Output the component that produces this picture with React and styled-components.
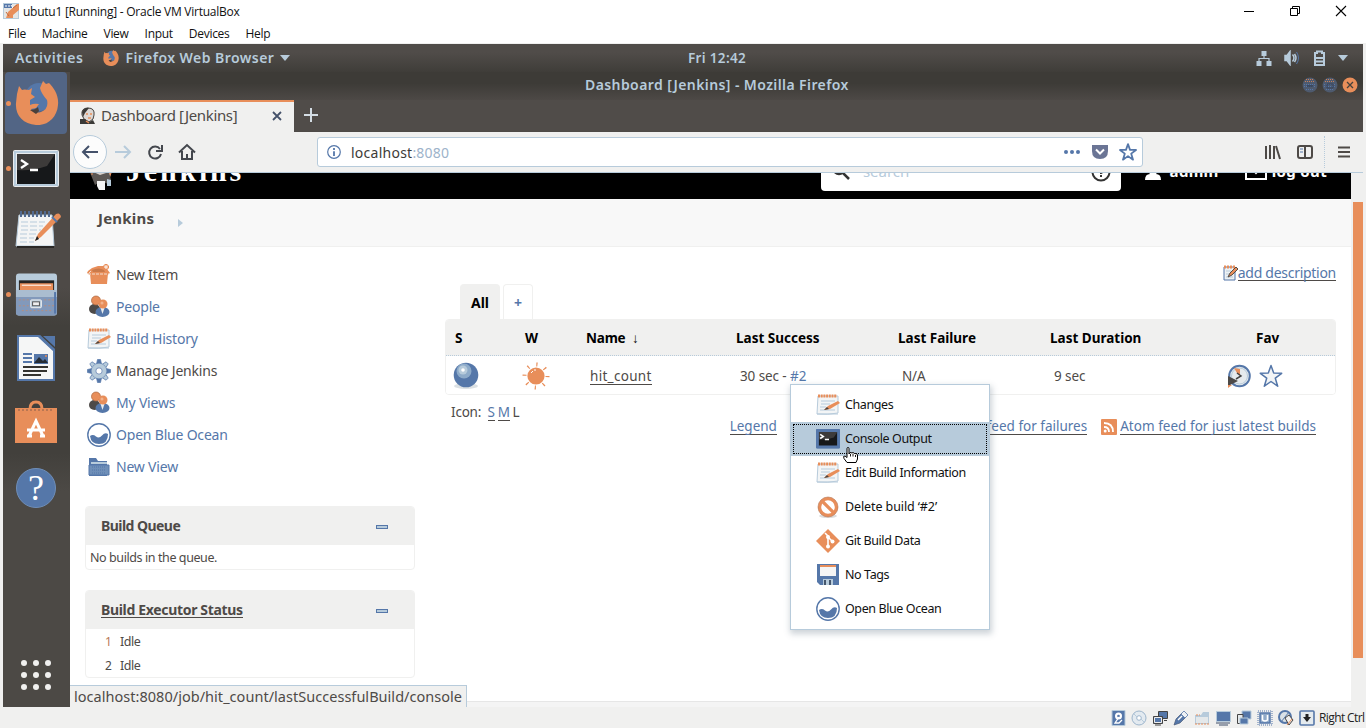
import React from "react";
import styled, { createGlobalStyle, css } from "styled-components";

const c = {
  orange: "#e88e5a",
  blue: "#5577a9",
  pale: "#b7cbdb",
  dark: "#4e4a47",
  ink: "#3d3b37",
  light: "#f0f0ef",
};

const Global = createGlobalStyle`
  * { box-sizing: border-box; }
  body { margin: 0; background: #f0f0ef; overflow: hidden; font-family: "Noto Sans", sans-serif; }
  svg { display: block; flex: none; }
`;

const Text = styled.span`
  white-space: pre;
  font-size: ${(p) => p.$size || 14}px;
  font-weight: ${(p) => p.$weight || 400};
  letter-spacing: ${(p) => p.$ls || 0}px;
  color: ${(p) => p.$color || c.dark};
`;
const Link = styled(Text)`
  color: ${(p) => p.$color || c.blue};
  line-height: 15px;
  border-bottom: 1px solid ${(p) => p.$line || c.dark};
`;
const Icon = styled.svg.attrs((p) => ({
  width: p.$w || 16,
  height: p.$h || 16,
  viewBox: `0 0 ${p.$w || 16} ${p.$h || 16}`,
  fill: "none",
  stroke: p.$color || c.dark,
  strokeWidth: p.$sw || 2,
}))`
  margin-left: ${(p) => p.$ml || 0};
  margin-top: ${(p) => p.$mt || 0}px;
`;

const Screen = styled.div`
  width: 1366px;
  height: 728px;
  display: flex;
  flex-direction: column;
  overflow: hidden;
`;
const HostTitle = styled.header`
  height: 24px;
  background: #fff;
  display: flex;
  align-items: center;
  padding: 0 19px 2px 3px;
  gap: 4px;
  font-family: "Open Sans", sans-serif;
`;
const HostButtons = styled.div`
  margin-left: auto;
  display: flex;
  gap: 34px;
`;
const HostMenu = styled.nav`
  height: 20px;
  background: #fff;
  display: flex;
  align-items: center;
  padding-left: 8px;
  gap: 16px;
  border-bottom: 1px solid ${c.light};
  font-family: "Open Sans", sans-serif;
`;
const Machine = styled.div`
  width: 1360px;
  height: 663px;
  margin-left: 3px;
  display: flex;
  flex-direction: column;
  position: relative;
  overflow: hidden;
`;
const TopBar = styled.div`
  height: 28px;
  background: linear-gradient(#504c49 30%, #3f3d39);
  display: grid;
  grid-template-columns: 673px 60px 1fr;
  align-items: center;
  padding: 0 15px 1px 12px;
`;
const BarGroup = styled.div`
  display: flex;
  align-items: center;
  gap: ${(p) => p.$gap || 0}px;
  justify-content: ${(p) => (p.$end ? "flex-end" : "flex-start")};
`;
const Desk = styled.div`
  flex: 1;
  display: flex;
  min-height: 0;
`;
const Dock = styled.aside`
  width: 67px;
  background: linear-gradient(#4e4a47 0 34%, #42403c 40% 60%, #4c4945 66% 100%);
  display: flex;
  flex-direction: column;
`;
const DockItem = styled.div`
  height: 64px;
  display: flex;
  align-items: center;
  padding-left: 3px;
  padding-top: ${(p) => p.$drop || 0}px;
  ${(p) =>
    p.$active &&
    css`
      height: 62px;
      margin: 0 3px 0 2px;
      padding-left: 1px;
      border-radius: 4px;
      background: #526585;
    `}
`;
const Dot = styled.i`
  width: 5px;
  height: 5px;
  border-radius: 50%;
  margin-right: ${(p) => (p.$wide ? 2 : 4)}px;
  background: ${(p) => (p.$on ? c.orange : "transparent")};
`;
const Apps = styled.div`
  margin: auto auto 17px 18px;
  display: grid;
  grid-template-columns: repeat(3, 6px);
  gap: 6px;
`;
const AppDot = styled.i`
  height: 6px;
  border-radius: 50%;
  background: #f0f0ef;
`;
const Browser = styled.section`
  flex: 1;
  min-width: 0;
  display: flex;
  flex-direction: column;
`;
const WinTitle = styled.div`
  height: 28px;
  background: linear-gradient(#3d3b37 40%, #4d4946);
  display: flex;
  align-items: center;
  justify-content: space-between;
  padding: 0 5px 3px 515px;
`;
const Controls = styled.div`
  display: flex;
  gap: 4px;
`;
const TabStrip = styled.div`
  height: 32px;
  background: #504c49;
  border-bottom: 1px solid ${c.dark};
  display: flex;
  align-items: center;
`;
const Tab = styled.div`
  width: 224px;
  height: 32px;
  background: ${c.light};
  border-top: 2px solid ${c.orange};
  display: flex;
  align-items: center;
  gap: 5px;
  padding: 0 12px 2px 10px;
  ${Text} {
    margin-top: -2px;
  }
`;
const NavBar = styled.div`
  height: 41px;
  background: ${c.light};
  border-bottom: 1px solid ${c.pale};
  display: flex;
  align-items: center;
  padding: 0 12px 0 3px;
`;
const Back = styled.div`
  width: 34px;
  height: 34px;
  border: 1px solid ${c.pale};
  border-radius: 50%;
  background: #fcfcfc;
  display: grid;
  place-items: center;
`;
const NavIcons = styled.div`
  display: flex;
  align-items: center;
  gap: 14px;
  margin-left: 7px;
  width: 203px;
`;
const UrlBox = styled.div`
  width: 826px;
  height: 30px;
  background: #fff;
  border: 1px solid ${c.pale};
  border-radius: 3px;
  margin-right: auto;
  display: flex;
  align-items: center;
  padding: 0 5px 0 9px;
`;
const UrlText = styled(Text)`
  color: ${c.ink};
  margin-left: 10px;
`;
const UrlIcons = styled.div`
  margin-left: auto;
  display: flex;
  align-items: center;
  gap: 10px;
`;
const Sep = styled.i`
  height: 32px;
  border-left: 1px dotted ${c.pale};
  margin: 0 12px 0 10px;
`;
const Viewport = styled.div`
  flex: 1;
  min-height: 0;
  display: flex;
`;
const Page = styled.main`
  width: 1281px;
  background: #fff;
  display: flex;
  flex-direction: column;
`;
const Scroll = styled.div`
  width: 12px;
  padding: 29px 0 0 2px;
  background: #f0f0ef;
`;
const Thumb = styled.div`
  height: 456px;
  background: ${c.orange};
`;
const JHead = styled.header`
  height: 26px;
  background: #000;
  overflow: hidden;
  display: flex;
  align-items: flex-end;
`;
const JHeadRow = styled.div`
  width: 100%;
  height: 54px;
  flex: none;
  display: flex;
  align-items: center;
  padding: 0 24px 0 18px;
  ${Text} {
    margin-top: -2px;
  }
`;
const Brand = styled.span`
  font: bold 30px "Liberation Serif", serif;
  letter-spacing: 2.8px;
  color: #fff;
  margin: -2px 0 0 12px;
`;
const Search = styled.div`
  margin-left: auto;
  width: 300px;
  height: 38px;
  background: #fff;
  border-radius: 4px;
  display: flex;
  align-items: center;
  padding: 0 10px;
  margin-right: 24px;
`;
const Crumbs = styled.div`
  height: 48px;
  background: #f8f8f8;
  border-bottom: 1px solid ${c.light};
  display: flex;
  align-items: center;
  padding: 0 28px 9px;
  gap: 24px;
`;
const Body = styled.div`
  flex: 1;
  display: flex;
  padding: 12px 15px 0 15px;
`;
const PageFoot = styled.footer`
  height: 6px;
  border-top: 1px solid #e6e6e6;
  background: #f4f4f4;
`;
const Side = styled.div`
  width: 330px;
  margin-right: 30px;
`;
const Task = styled.div`
  height: 32px;
  display: flex;
  align-items: center;
  gap: 5px;
  padding-left: 2px;
  ${Text} {
    margin-top: -2px;
  }
`;
const Pane = styled.section`
  border: 1px solid ${c.light};
  border-radius: 4px;
  margin-top: ${(p) => p.$top}px;
  height: ${(p) => p.$h}px;
  overflow: hidden;
`;
const PaneHead = styled.div`
  height: 38px;
  background: ${c.light};
  display: flex;
  align-items: center;
  justify-content: space-between;
  padding: 0 26px 0 15px;
`;
const PaneTitle = styled(Text)`
  margin-top: -2px;
`;
const Minus = styled.i`
  width: 12px;
  height: 4px;
  margin-top: 2px;
  background: ${c.pale};
  border: 1px solid ${c.blue};
`;
const PaneRow = styled.div`
  height: 24px;
  display: flex;
  align-items: center;
  gap: 8px;
  padding-left: ${(p) => p.$pl}px;
`;
const Main = styled.div`
  width: 891px;
`;
const Describe = styled.div`
  display: flex;
  justify-content: flex-end;
  align-items: center;
  height: 25px;
  padding-top: 3px;
`;
const Tabs = styled.div`
  display: flex;
  gap: 3px;
  height: 35px;
  padding-left: 15px;
`;
const ViewTab = styled.div`
  width: ${(p) => p.$w}px;
  border-radius: 4px 4px 0 0;
  border: 1px solid ${c.light};
  border-bottom: 0;
  background: ${(p) => (p.$on ? c.light : "#fff")};
  display: grid;
  place-items: center;
  padding-top: 1px;
`;
const Table = styled.div`
  border: 1px solid ${c.light};
  border-radius: 4px;
  height: 76px;
  overflow: hidden;
`;
const Tr = styled.div`
  display: grid;
  grid-template-columns: 70px 61px 150px 162px 152px 206px 1fr;
  align-items: center;
  padding-left: 9px;
  height: ${(p) => (p.$head ? 36 : 38)}px;
  background: ${(p) => (p.$head ? c.light : "#fff")};
  ${(p) => p.$head && `border-bottom: 1px dotted ${c.pale};`}
`;
const Cell = styled.div`
  display: flex;
  align-items: center;
  padding: ${(p) => p.$top || 2}px 0 0 4px;
`;
const IconCell = styled.div`
  padding-top: 1px;
  display: flex;
  gap: 8px;
  margin-left: -${(p) => p.$shift}px;
`;
const Below = styled.div`
  display: flex;
  height: 44px;
  justify-content: space-between;
`;
const Sizes = styled.div`
  display: flex;
  align-items: baseline;
  gap: 3px;
  padding: 8px 0 0 6px;
`;
const Feeds = styled.div`
  display: flex;
  align-items: flex-start;
  padding: 24px 20px 0 0;
`;
const Feed = styled.div`
  display: flex;
  gap: 3px;
  margin-left: ${(p) => p.$ml}px;
`;
const UrlStatus = styled.div`
  position: absolute;
  left: 67px;
  bottom: 0;
  width: 397px;
  height: 22px;
  background: ${c.light};
  border: solid ${c.pale};
  border-width: 1px 1px 0 0;
  display: flex;
  align-items: center;
  padding: 0 0 2px 4px;
`;
const Menu = styled.div`
  position: absolute;
  left: 787px;
  top: 340px;
  width: 200px;
  height: 246px;
  background: #fff;
  border: 1px solid ${c.pale};
  padding: 3px 0;
  box-shadow: 1px 3px 6px 1px rgba(80, 100, 120, 0.28);
`;
const MenuItem = styled.div`
  height: 34px;
  display: flex;
  align-items: center;
  gap: 5px;
  padding-left: 25px;
  ${Text} {
    margin-top: -2px;
  }
  ${(p) =>
    p.$on &&
    css`
      background: ${c.pale};
      border: 1px dotted #000;
      box-shadow: 0 0 0 2px ${c.pale};
      height: 30px;
      margin: 2px;
      padding-left: 22px;
    `}
`;
const Cursor = styled.div`
  position: absolute;
  left: 840px;
  top: 403px;
`;
const Status = styled.footer`
  height: 21px;
  display: flex;
  align-items: center;
  gap: 5px;
  padding-left: 1110px;
  font-family: "Open Sans", sans-serif;
`;
const KeyLabel = styled(Text)`
  margin-left: -1px;
`;
const HelpBadge = styled.div`
  width: 40px;
  height: 40px;
  border-radius: 50%;
  background: ${c.blue};
  border: 1px solid #6f8eb8;
  display: grid;
  place-items: center;
  color: #fff;
  font: 36px/38px "Liberation Serif", serif;
  margin: 4px 0 0 1px;
`;

const Firefox = ({ s = 44 }) => (
  <svg width={s} height={s} viewBox="0 0 44 44">
    <circle cx="24" cy="16" r="14" fill={c.blue} />
    <path
      fill={c.orange}
      d="M28 0 L31 3 34 2 C39 7 44 14 43 24 C42 37 32 45 21 44 C8 43 0 34 1 22 L2 13 4 5 7 9 Q9 8 14 9 L17 7 16 13 20 16 15 19 15 24 Q19 22 24 23 L21 27 16 28 Q19 33 26 31 Q34 28 32 19 Q26 12 25 7Z"
    />
    <path fill="#4a3f3a" d="M15 29q5 0 8-3l1 4-3 3z" />
  </svg>
);
const TerminalIcon = ({ small }) => (
  <svg width={small ? 24 : 46} height={small ? 20 : 38} viewBox="0 0 46 38">
    <rect width="46" height="37" rx="2" fill={small ? c.blue : "#e9ecee"} />
    <rect x="2" y="2" width="42" height="33" fill="none" stroke={small ? c.blue : c.pale} strokeWidth="2" />
    <rect x="4" y="4" width="38" height="30" fill="#16181a" />
    <path d="M4 4h38L34 16Q20 21 4 20z" fill="#3d3b3a" />
    {small && <path d="M3 3h40v31H3z" fill="none" stroke={c.blue} strokeWidth="5" />}
    <path d="M8 10l6 4-6 4M17 20h8" stroke="#fff" strokeWidth={small ? 3 : 2.3} fill="none" />
  </svg>
);
const NoteIcon = () => (
  <svg width="46" height="40" viewBox="0 0 46 40">
    <path d="M4 5h33l2 31H1z" fill="#f4f5f5" stroke={c.pale} />
    <path d="M2 37h37" stroke="#2a2826" strokeWidth="2" />
    <path d="M5 4h31" stroke="#526b91" strokeWidth="6" strokeDasharray="2 2" />
    <path d="M6 12h24M6 16h22M6 20h20M5 24h17M5 28h14M5 32h14" stroke={c.pale} strokeDasharray="7 2" />
    <path d="M20 31l3-7L41 4q4-2 5 3L26 27z" fill={c.orange} />
    <path d="M37 7l5 5" stroke={c.blue} strokeWidth="2" />
    <path d="M20 31l2-5 2 3z" fill="#222" />
  </svg>
);
const FilesIcon = () => (
  <svg width="43" height="45" viewBox="0 0 44 45">
    <rect x="1" y="1" width="42" height="43" rx="3" fill={c.pale} />
    <rect x="4" y="8" width="36" height="14" fill="#262524" />
    <path d="M5 11h34v10H5z" fill={c.orange} />
    <path d="M7 13h30" stroke="#fff" />
    <path d="M1 18h42v23q0 3-3 3H4q-3 0-3-3z" fill="#8299bb" />
    <path d="M1 18h42v7H1z" fill="#aabdd0" />
    <path d="M4 28h10M30 28h10M4 34h10M30 34h10M7 39h31" stroke="#b58d7d" strokeDasharray="2 2" />
    <path d="M41 20v22" stroke={c.blue} strokeWidth="2" />
    <rect x="16" y="28" width="11" height="8" rx="1" fill={c.pale} stroke="#eee" />
    <rect x="18" y="30" width="7" height="4" fill="#eee" stroke="#555" />
  </svg>
);
const WriterIcon = () => (
  <svg width="42" height="46" viewBox="0 0 42 46">
    <path d="M3 1h21l15 14v30H3z" fill="#f5f6f6" stroke={c.blue} strokeWidth="2" />
    <path d="M28 1h12v11z" fill={c.blue} />
    <path d="M24 1l15 14" stroke={c.blue} strokeWidth="3" />
    <path d="M8 19h9M8 23h9M8 27h9" stroke={c.blue} strokeWidth="2" />
    <rect x="19" y="19" width="14" height="10" fill={c.blue} />
    <path d="M19 28l5-6 4 4 2-2 3 4z" fill="#252c34" />
    <circle cx="31" cy="21" r="1" fill={c.orange} />
    <path d="M8 32h25M8 36h24M8 40h18" stroke="#34332f" strokeWidth="2" />
  </svg>
);
const BagIcon = () => (
  <svg width="42" height="44" viewBox="0 0 42 44">
    <path d="M0 8h42v35H0z" fill={c.orange} />
    <path d="M15 9q0-7 6-7t6 7" fill="none" stroke={c.orange} strokeWidth="3" />
    <path d="M3 10h36" stroke="#8b5f4a" strokeDasharray="2 2" />
    <path d="M14 36l7-15 7 15M12 30h18M12 36h5M25 36h5" fill="none" stroke="#fff" strokeWidth="3" />
  </svg>
);

const Face = () => (
  <svg width="16" height="17" viewBox="0 0 16 17">
    <path d="M2 8Q1 1 8 1t6 7l-1 4-4 3-5-3z" fill="#dcd8d5" stroke="#44413e" />
    <path d="M2 5q3-5 7-4l-4 5-2 4zM0 12l5 0 4 3 4-2 2 4H0z" fill="#3a3937" />
    <path d="M6 7h2m2 0h2M8 11h3M6 14l3 2" stroke={c.orange} strokeWidth="1.5" />
  </svg>
);
const Butler = () => (
  <svg width="26" height="40" viewBox="0 0 26 40">
    <path d="M2 15Q4 2 14 3q10 1 10 15l-3 9-9 4z" fill="#d9d3cf" stroke={c.orange} />
    <path d="M1 18l11 5 9-3 2 8-3 4-7-3-6 4z" fill="#5c5855" />
    <path d="M4 18v6M20 17l2 6" stroke={c.orange} strokeDasharray="2 1" />
    <path d="M9 29h8v9h-6l-2-4z" fill="#f4f4f4" />
    <path d="M19 27l4 1v6h-4z" fill={c.pale} />
  </svg>
);
const Pad = () => (
  <svg width="24" height="24" viewBox="0 0 24 24">
    <path d="M2 3h20v17q-10 2-21 1z" fill="#f3f5f6" stroke={c.pale} />
    <path d="M2 3h19" stroke={c.orange} strokeWidth="3" strokeDasharray="2 .7" />
    <path d="M1 21h21M5 8h14M5 11h9M4 14h6M4 17h15" stroke={c.pale} />
    <path d="M8 17l4-4 10-5 2 2-10 6z" fill={c.orange} />
    <path d="M8 17l3-3 2 2z" fill="#4d453e" />
  </svg>
);
const Box = () => (
  <svg width="24" height="24" viewBox="0 0 24 24">
    <path d="M3 10h18l-1 11H4z" fill={c.orange} />
    <path d="M1 8l4-3 6-2h6l3 3 3 4-3 2H3l-3-2z" fill={c.orange} />
    <path d="M5 7q7-3 12 0l1 2H6z" fill="#c97a4b" />
    <path d="M1 11h21M4 8l-3 3" stroke="#f3ded1" fill="none" strokeDasharray="3 1" />
    <path d="M19 1v6M16 4h6" stroke={c.orange} strokeWidth="3" />
    <path d="M19 2v4M17 4h4" stroke="#fff" />
  </svg>
);
const People = () => (
  <svg width="24" height="24" viewBox="0 0 24 24">
    <ellipse cx="7.500" cy="14" rx="5.500" ry="5" fill="#4d4a48" />
    <circle cx="9" cy="5.500" r="4.500" fill={c.orange} stroke="#a9663f" strokeWidth=".7" />
    <ellipse cx="15.500" cy="17" rx="7" ry="5" fill={c.blue} />
    <path d="M13.500 13l2 6 2-6z" fill="#e9edf0" />
    <circle cx="16" cy="9" r="4.500" fill={c.orange} />
    <circle cx="15" cy="8" r="1.500" fill="#f2b38d" />
  </svg>
);
const teeth = [0, 45, 90, 135, 180, 225, 270, 315];
const Gear = () => (
  <svg width="24" height="24" viewBox="0 0 24 24">
    {teeth.map((a) => (
      <path key={a} d="M9.500 5l1-4.500h3l1 4.500z" fill={a % 90 ? c.pale : c.blue} stroke={c.blue} strokeWidth=".7" transform={`rotate(${a} 12 12)`} />
    ))}
    <circle cx="12" cy="12" r="5.600" fill="none" stroke={c.pale} strokeWidth="4.500" />
    <circle cx="12" cy="12" r="7.800" fill="none" stroke={c.blue} strokeWidth=".5" />
    <circle cx="12" cy="12" r="3.200" fill="#fff" stroke={c.blue} strokeWidth=".8" />
  </svg>
);
const Ocean = () => (
  <svg width="24" height="24" viewBox="0 0 24 24">
    <circle cx="12" cy="12" r="11.2" fill="#fff" stroke={c.blue} strokeWidth="1.4" />
    <path d="M3 13q3-2 6 .5t6-1 6-1.500q0 10-9 10-8 0-9-8z" fill={c.blue} />
  </svg>
);
const FolderIcon = () => (
  <svg width="24" height="24" viewBox="0 0 24 24">
    <path d="M2 3h7l2 3h9v15H2z" fill={c.blue} />
    <path d="M4 8h16" stroke={c.pale} strokeWidth="2" />
    <path d="M2 20V10h20v10H2z" fill="#6f8fb8" stroke={c.blue} />
    <path d="M5 12h14M5 15h13M5 18h14" stroke={c.blue} strokeDasharray="1 1" />
  </svg>
);
const Ball = () => (
  <svg width="26" height="28" viewBox="0 0 26 28">
    <ellipse cx="13" cy="24" rx="12" ry="3" fill="#dbe0e3" />
    <circle cx="13" cy="13" r="12.300" fill={c.blue} />
    <circle cx="11" cy="9" r="7.500" fill="#8eabc9" />
    <circle cx="10" cy="8" r="4.500" fill={c.pale} />
    <circle cx="10" cy="8" r="1.800" fill="#fff" />
  </svg>
);
const Sun = () => (
  <svg width="28" height="28" viewBox="0 0 28 28">
    <circle cx="14" cy="14" r="11.500" fill="none" stroke={c.orange} strokeWidth="4" strokeDasharray="1.200 7.830" />
    <circle cx="14" cy="14" r="8.600" fill={c.orange} />
    <path d="M9 11l2-2m1-1h2" stroke="#fff" />
  </svg>
);
const Schedule = () => (
  <svg width="24" height="24" viewBox="0 0 24 24">
    <circle cx="12.500" cy="12" r="10.300" fill="#e5eaed" stroke={c.blue} strokeWidth="2" />
    <circle cx="12.500" cy="12" r="8" fill="none" stroke={c.pale} />
    <path d="M7 4l6 1v6l-3-2z" fill={c.orange} />
    <path d="M10 9l4 3-5 3" fill="none" stroke="#444" strokeWidth="1.500" />
    <path d="M1 12l10 5-10 5z" fill="#4d4a48" />
    <path d="M1 21v3l4-3z" fill={c.orange} />
  </svg>
);
const Star = ({ s, fill = "#fff", sw = 1.5 }) => (
  <svg width={s} height={s} viewBox="0 0 24 24">
    <path
      d="M12 1.500l2.700 7.600 8 .2-6.400 4.900 2.400 8L12 17.500l-6.700 4.700 2.400-8L1.300 9.300l8-.2z"
      fill={fill}
      stroke={c.blue}
      strokeWidth={sw}
      strokeLinejoin="round"
    />
  </svg>
);
const Rss = () => (
  <svg width="16" height="16" viewBox="0 0 16 16">
    <rect width="16" height="16" rx="1" fill={c.orange} />
    <path d="M3 4q9 0 9 9M3 8q5 0 5 5" stroke="#fff" strokeWidth="1.800" fill="none" />
    <circle cx="4.200" cy="12" r="1.500" fill="#fff" />
  </svg>
);
const EditIcon = () => (
  <svg width="15" height="16" viewBox="0 0 15 16">
    <path d="M1 2h11v13H1z" fill="#eef1f3" stroke={c.blue} />
    <path d="M1 2h11" stroke={c.orange} strokeWidth="3" strokeDasharray="2 1" />
    <path d="M3 6h5M3 9h3M3 12h7" stroke={c.pale} />
    <path d="M5 12l2-4 6-6 2 2-6 6z" fill={c.orange} stroke="#44413e" strokeWidth=".9" />
  </svg>
);
const Forbid = () => (
  <svg width="24" height="24" viewBox="0 0 24 24">
    <ellipse cx="12" cy="21" rx="9" ry="2" fill="#ddd" />
    <circle cx="12" cy="12" r="8.400" fill="#fff" stroke={c.orange} strokeWidth="3.200" />
    <path d="M6 6l12 12" stroke={c.orange} strokeWidth="3.200" />
    <circle cx="12" cy="12" r="10" fill="none" stroke="#b37452" strokeWidth=".6" />
  </svg>
);
const Git = () => (
  <svg width="24" height="24" viewBox="0 0 24 24">
    <path d="M12 0l12 12-12 12L0 12z" fill={c.orange} />
    <path d="M9 4l3 3v11M12 8l5 5" stroke="#fff" strokeWidth="1.600" fill="none" />
    <circle cx="12" cy="8" r="2" fill="#fff" />
    <circle cx="12" cy="17.500" r="2" fill="#fff" />
    <circle cx="16.500" cy="12.500" r="2" fill="#fff" />
  </svg>
);
const Floppy = () => (
  <svg width="24" height="24" viewBox="0 0 24 24">
    <path d="M1 1h22v21H4l-3-3z" fill={c.blue} />
    <rect x="4" y="2" width="16" height="11" fill="#f5f5f5" />
    <path d="M4 3h16" stroke={c.orange} strokeWidth="2" />
    <path d="M7 16h10v6H7z" fill={c.pale} />
    <path d="M9 17v5M14 17v5" stroke="#45566d" strokeWidth="2" />
  </svg>
);
const Hand = () => (
  <svg width="16" height="17" viewBox="0 0 16 17">
    <path
      d="M4 1.500q0-1 1-1t1 1V7l1-1.500 2 .5 1-.5 1.500 1 2 .2 1 1.300v4L13 15.500H4L1 11.500 .6 9.500 2 9l2 1.500z"
      fill="#fff"
      stroke="#000"
    />
    <path d="M7.500 7v2.500M10 7v2.500M12.500 8v2" stroke="#000" strokeWidth=".9" />
  </svg>
);
const HostIcon = () => (
  <svg width="16" height="16" viewBox="0 0 16 16">
    <rect x=".5" y=".5" width="15" height="15" fill="#e5e5e3" stroke={c.pale} />
    <path d="M3 15l2-6 9-8h2v6l-6 5v3z" fill={c.orange} />
    <path d="M1 1h8v4H1z" fill={c.blue} />
    <path d="M2 3h2m1 0h2M8 2l2 3" stroke="#fff" />
    <path d="M10 5l4-3M3 9l3 4" stroke="#c46b3c" />
  </svg>
);

const statusShapes = [
  <g key="disk"><path d="M2 .5h13v15H2z" fill={c.blue} stroke={c.pale} /><circle cx="8.500" cy="6" r="3.500" fill="#fff" /><circle cx="8.500" cy="6" r="1.300" fill={c.blue} /><path d="M9 7l-4 6h4l3-3" fill="none" stroke="#fff" strokeWidth="1.300" /></g>,
  <g key="cd"><circle cx="8" cy="8" r="7" fill="#e3eaf0" stroke="#9db5cc" /><circle cx="8" cy="8" r="2.300" fill="#fff" stroke="#9db5cc" /><path d="M3 4l3 3M10 9l3 3" stroke={c.pale} /></g>,
  <g key="net"><path d="M6.500 1.500h9v7h-9z" fill={c.blue} stroke="#444" /><path d="M1.500 6.500h9v7h-9z" fill={c.blue} stroke="#444" /><path d="M2.500 7.500h7v5h-7z" fill={c.blue} stroke="#eee" /><path d="M3 15h6M12 10.500h3" stroke="#444" /></g>,
  <g key="usb"><path d="M1 15l2-6 6-6 4 4-6 6z" fill={c.blue} stroke="#3c4d69" strokeWidth=".6" /><path d="M11 1l4 4-3 3-4-4z" fill="#eef1f4" stroke={c.blue} strokeWidth=".8" /><path d="M5 10l4-4" stroke="#fff" strokeWidth="1.500" /></g>,
  <g key="folder"><path d="M1 5h6l2-3h6v12H1z" fill={c.pale} /><path d="M2 7h12v6H2z" fill="#e4e8ea" /><path d="M1 14h14M2 5h4" stroke={c.orange} strokeDasharray="2 1" /></g>,
  <g key="display"><path d="M1.500 1.500h14v10h-14z" fill={c.blue} stroke={c.pale} /><path d="M1 13h14M4 15h9" stroke="#3c4d69" /></g>,
  <g key="windows"><path d="M6 1h9v8H6z" fill={c.blue} stroke={c.pale} /><path d="M1.500 4.500H7v9H1.500z" fill="#e4e8ea" stroke="#444" /><path d="M4 8h8v6H4z" fill={c.blue} stroke={c.pale} /></g>,
  <g key="cpu"><path d="M3 3h10v10H3z" fill="#8fa9c8" stroke={c.blue} strokeWidth="1.500" /><path d="M1 1h14v14H1z" fill="none" stroke={c.blue} strokeDasharray="1 1" /><path d="M5.500 5v5q2.500 2 5 0V5" fill="none" stroke="#fff" strokeWidth="1.600" /></g>,
  <g key="mouse"><circle cx="7" cy="7" r="6" fill="#d9e1e7" stroke={c.blue} strokeWidth="2" /><path d="M3 12L11 2" stroke={c.blue} /><path d="M7 8l4-3 4 5-4 5z" fill="#eee" stroke="#444" /><path d="M9 15l5-6" stroke={c.orange} /></g>,
  <g key="keyboard"><rect x="1" y="1" width="14" height="14" rx="1" fill="#e4eaee" stroke={c.blue} strokeWidth="1.600" /><path d="M8 4v4" stroke="#222" strokeWidth="3" /><path d="M4 7h8l-4 5z" fill="#222" /></g>,
];

const tasks = [
  ["New Item", Box, c.dark],
  ["People", People],
  ["Build History", Pad],
  ["Manage Jenkins", Gear, c.dark],
  ["My Views", People],
  ["Open Blue Ocean", Ocean],
  ["New View", FolderIcon],
];
const SmallTerminal = () => <TerminalIcon small />;
const menu = [
  ["Changes", Pad],
  ["Console Output", SmallTerminal],
  ["Edit Build Information", Pad],
  ["Delete build ‘#2’", Forbid, -0.1],
  ["Git Build Data", Git],
  ["No Tags", Floppy],
  ["Open Blue Ocean", Ocean],
];
const Help = () => <HelpBadge>?</HelpBadge>;
const dock = [
  { Art: Firefox, on: true },
  { Art: TerminalIcon, on: true, drop: 5 },
  { Art: NoteIcon },
  { Art: FilesIcon, on: true, drop: 1 },
  { Art: WriterIcon },
  { Art: BagIcon },
  { Art: Help },
];

export default function App() {
  return (
    <Screen>
      <Global />
      <HostTitle>
        <HostIcon />
        <Text $size={12} $ls={-0.25} $color="#111">ubutu1 [Running] - Oracle VM VirtualBox</Text>
        <HostButtons>
          <Icon $w={12} $h={12} $color="#000" $sw={1}><path d="M1 6.500h10" /></Icon>
          <Icon $w={12} $h={12} $color="#000" $sw={1}><path d="M1.500 3.500h7v7h-7zM3.500 3V1.500h7v7H9" /></Icon>
          <Icon $w={12} $h={12} $color="#000" $sw={1.1}><path d="M1 1l10 10M11 1L1 11" /></Icon>
        </HostButtons>
      </HostTitle>
      <HostMenu>
        {["File", "Machine", "View", "Input", "Devices", "Help"].map((t) => (
          <Text key={t} $size={12} $ls={-0.29} $color="#111">{t}</Text>
        ))}
      </HostMenu>
      <Machine>
        <TopBar>
          <BarGroup $gap={20}>
            <Text $weight={600} $ls={0.6} $color={c.pale}>Activities</Text>
            <BarGroup $gap={6}>
              <Firefox s={16} />
              <Text $weight={600} $ls={0.45} $color={c.pale}>Firefox Web Browser</Text>
              <Icon $w={10} $h={6} $color="none"><path d="M0 0h10L5 6z" fill={c.pale} /></Icon>
            </BarGroup>
          </BarGroup>
          <Text $size={13.5} $weight={600} $ls={0.33} $color={c.pale}>Fri 12:42</Text>
          <BarGroup $end $gap={12}>
            <Icon $color={c.pale} $sw={1.2}><path d="M8 4v5M3 11V8.500h10V11" /><path d="M5.500 1h5v5h-5zM.5 11h5v5h-5zM10.500 11h5v5h-5z" fill={c.pale} stroke="none" /></Icon>
            <Icon $color={c.pale} $sw={1.5}><path d="M1 5.500h2l3-4v13l-3-4H1z" fill={c.pale} /><path d="M8.500 4.500q3 3.500 0 7M10.500 4q3 4 0 8" /><path d="M12.500 2q4 6 0 12" stroke={c.blue} strokeWidth="1" /></Icon>
            <Icon $w={14} $color={c.pale}><path d="M3 3h2V1.500h5V3h2v12H3zM4 8h7M4 11.500h7" /></Icon>
            <Icon $w={10} $h={6} $color="none"><path d="M0 0h10L5 6z" fill={c.pale} /></Icon>
          </BarGroup>
        </TopBar>
        <Desk>
          <Dock>
            {dock.map(({ Art, on, drop }, i) => (
              <DockItem key={i} $active={i === 0} $drop={drop}>
                <Dot $on={on} $wide={i === 1} />
                <Art />
              </DockItem>
            ))}
            <Apps>{Array.from({ length: 9 }, (_, i) => <AppDot key={i} />)}</Apps>
          </Dock>
          <Browser>
            <WinTitle>
              <Text $size={14} $weight={600} $ls={0.41} $color={c.pale}>Dashboard [Jenkins] - Mozilla Firefox</Text>
              <Controls>
                {["#4e5a6e", "#4e5a6e", c.orange].map((f, i) => (
                  <svg key={i} width="16" height="16" viewBox="0 0 16 16">
                    <circle cx="8" cy="8" r="7.500" fill={f} />
                    {i < 2 && <path d="M4 2.500h8M3 4.500h10" stroke="#c98058" strokeDasharray="1 1" />}
                    {i < 2 && <path d="M2 7.500h12M2 9.500h12M4 12.500h8" stroke={c.blue} strokeDasharray="1 1" />}
                    {i === 0 && <path d="M5 9h6" stroke="#36435a" strokeWidth="1.500" />}
                    {i === 1 && <path d="M5 7h6v4H5z" stroke="#36435a" fill="none" />}
                    {i === 2 && <path d="M5 5l6 6M11 5l-6 6" stroke="#44403c" strokeWidth="1.300" />}
                  </svg>
                ))}
              </Controls>
            </WinTitle>
            <TabStrip>
              <Tab>
                <Face />
                <Text $size={15} $ls={-0.35}>Dashboard [Jenkins]</Text>
                <Icon $w={10} $h={10} $ml="auto" $color="#44516a" $sw={1.8}><path d="M1 1l8 8M9 1l-8 8" /></Icon>
              </Tab>
              <Icon $ml="9px" $mt={-2} $color="#d4dde4"><path d="M8 1v14M1 8h14" /></Icon>
            </TabStrip>
            <NavBar>
              <Back><Icon $w={18} $color="#44516a"><path d="M2 8h15M8 2L2 8l6 6" /></Icon></Back>
              <NavIcons>
                <Icon $w={18} $color={c.pale}><path d="M1 8h15M10 2l6 6-6 6" /></Icon>
                <Icon $w={18} $h={18} $color="#44474d"><path d="M14 6A6 6 0 1 0 15 11" /><path d="M16 2v6h-6" /></Icon>
                <Icon $w={18} $h={18} $color="#44474d"><path d="M1 9.500L9 2l8 7.500M4 8v8h10V8M9 16v-5" /></Icon>
              </NavIcons>
              <UrlBox>
                <Icon $w={14} $h={14} $color={c.blue} $sw={1.2}><circle cx="7" cy="7" r="6.300" /><path d="M7 3v2M7 6.300V11" strokeWidth="1.800" /></Icon>
                <UrlText $ls={0.25}>localhost<Text $ls={0.2} $color="#9db3ca">:8080</Text></UrlText>
                <UrlIcons>
                  <Icon $w={18} $h={6} $color="none"><g fill={c.blue}><circle cx="3" cy="3" r="2" /><circle cx="9" cy="3" r="2" /><circle cx="15" cy="3" r="2" /></g></Icon>
                  <Icon $w={18} $color="none"><path d="M1 1h16v6q0 8-8 8T1 7z" fill="#6b7595" /><path d="M5 5.500l4 4 4-4" stroke="#fff" /></Icon>
                  <Star s={18} sw={2.4} />
                </UrlIcons>
              </UrlBox>
              <Icon $w={18}><path d="M2 2v13M6 1v14M10 2v13M12 2l4 13" /></Icon>
              <Icon $w={18} $ml="14px"><rect x="2" y="2" width="14" height="12" rx="2" /><path d="M9 2v12" /><path d="M4 5h3M4 8h3" stroke={c.blue} strokeWidth="1" /></Icon>
              <Sep />
              <Icon $w={14} $h={14}><path d="M1 2.500h12M1 7h12M1 11.500h12" /></Icon>
            </NavBar>
            <Viewport>
              <Page>
                <JHead>
                  <JHeadRow>
                    <Butler />
                    <Brand>Jenkins</Brand>
                    <Search>
                      <Icon $w={20} $h={20} $color="#333" $sw={2.5}><circle cx="8" cy="7" r="5" /><path d="M12 11l6 6" /></Icon>
                      <Text $size={15} $color={c.pale}>{"   search"}</Text>
                      <Icon $w={20} $h={20} $ml="auto" $color="#333"><circle cx="10" cy="10" r="8.500" /><path d="M7.500 8q0-3 2.500-3t2.500 2.500T10 11v1M10 13v2" /></Icon>
                    </Search>
                    <Icon $h={18} $color="none"><path d="M0 17q0-6 5-6-2-2-2-5 0-5 5-5t5 5q0 3-2 5 5 0 5 6z" fill="#fff" /></Icon>
                    <Text $size={15} $weight={700} $ls={0.3} $color="#fff">{"  admin"}</Text>
                    <Icon $w={22} $h={20} $ml="27px" $color="#fff"><path d="M7 4H1v13h20V4h-6M11 1v10M7 7l4 4 4-4" /></Icon>
                    <Text $size={15} $weight={700} $ls={0.35} $color="#fff"> log out</Text>
                  </JHeadRow>
                </JHead>
                <Crumbs>
                  <Text $size={15} $weight={700} $ls={0.2}>Jenkins</Text>
                  <Icon $w={5} $h={8} $mt={9} $color="none"><path d="M0 0l5 4-5 4z" fill={c.pale} /></Icon>
                </Crumbs>
                <Body>
                  <Side>
                    {tasks.map(([t, Art, color]) => (
                      <Task key={t}><Art /><Text $ls={-0.2} $color={color || c.blue}>{t}</Text></Task>
                    ))}
                    <Pane $top={23} $h={64}>
                      <PaneHead><PaneTitle $weight={700} $ls={-0.55}>Build Queue</PaneTitle><Minus /></PaneHead>
                      <PaneRow $pl={4}><Text $size={12.5} $ls={-0.41}>No builds in the queue.</Text></PaneRow>
                    </Pane>
                    <Pane $top={20} $h={88}>
                      <PaneHead><Link $weight={700} $ls={-0.33} $color={c.dark}>Build Executor Status</Link><Minus /></PaneHead>
                      <PaneRow $pl={19}><Text $size={12} $color="#b97a58">1</Text><Text $size={12.5} $ls={-0.4}>Idle</Text></PaneRow>
                      <PaneRow $pl={19}><Text $size={12}>2</Text><Text $size={12.5} $ls={-0.4}>Idle</Text></PaneRow>
                    </Pane>
                  </Side>
                  <Main>
                    <Describe><EditIcon /><Link $ls={-0.28}>add description</Link></Describe>
                    <Tabs>
                      <ViewTab $w={40} $on><Text $weight={700} $color="#000">All</Text></ViewTab>
                      <ViewTab $w={30}><Text $weight={700} $color={c.blue}>+</Text></ViewTab>
                    </Tabs>
                    <Table>
                      <Tr $head>
                        {["S", "W", "Name  ↓", "Last Success", "Last Failure", "Last Duration", "Fav"].map((t) => (
                          <Text key={t} $size={13.5} $weight={700} $ls={t.startsWith("Name") ? -0.2 : 0} $color="#000">{t}</Text>
                        ))}
                      </Tr>
                      <Tr>
                        <IconCell $shift={2}><Ball /></IconCell>
                        <IconCell $shift={3}><Sun /></IconCell>
                        <Cell $top={4}><Link $size={13.5} $ls={0.3} $color={c.dark}>hit_count</Link></Cell>
                        <Cell><Text $size={13.5} $ls={-0.1}>30 sec - <Link $size={13.5} $line={c.blue}>#2</Link></Text></Cell>
                        <Cell><Text $size={13.5} $ls={-0.2}>N/A</Text></Cell>
                        <Cell><Text $size={13.5} $ls={-0.1}>9 sec</Text></Cell>
                        <IconCell $shift={29}><Schedule /><Star s={24} fill="#f3f5f6" /></IconCell>
                      </Tr>
                    </Table>
                    <Below>
                      <Sizes><Text $size={13.5} $ls={-0.2}>Icon: </Text><Link $size={13.5} $ls={-0.3}>S</Link><Link $size={13.5} $ls={-0.3}>M</Link><Text $size={13.5}>L</Text></Sizes>
                      <Feeds>
                        <Link $size={13.5}>Legend</Link>
                        <Feed $ml={153}><Rss /><Link $size={13.5}>Atom feed for failures</Link></Feed>
                        <Feed $ml={14}><Rss /><Link $size={13.5} $ls={0.03}>Atom feed for just latest builds</Link></Feed>
                      </Feeds>
                    </Below>
                  </Main>
                </Body>
                <PageFoot />
              </Page>
              <Scroll><Thumb /></Scroll>
            </Viewport>
          </Browser>
        </Desk>
        <UrlStatus><Text $size={14.5} $ls={0.03}>localhost:8080/job/hit_count/lastSuccessfulBuild/console</Text></UrlStatus>
        <Menu>
          {menu.map(([t, Art, ls], i) => (
            <MenuItem key={t} $on={i === 1}><Art /><Text $size={12.5} $ls={ls || -0.4} $color="#111">{t}</Text></MenuItem>
          ))}
        </Menu>
        <Cursor><Hand /></Cursor>
      </Machine>
      <Status>
        {statusShapes.map((g, i) => <svg key={i} width="16" height="16" viewBox="0 0 16 16">{g}</svg>)}
        <KeyLabel $size={12} $ls={-0.6} $color="#222">Right Ctrl</KeyLabel>
      </Status>
    </Screen>
  );
}
